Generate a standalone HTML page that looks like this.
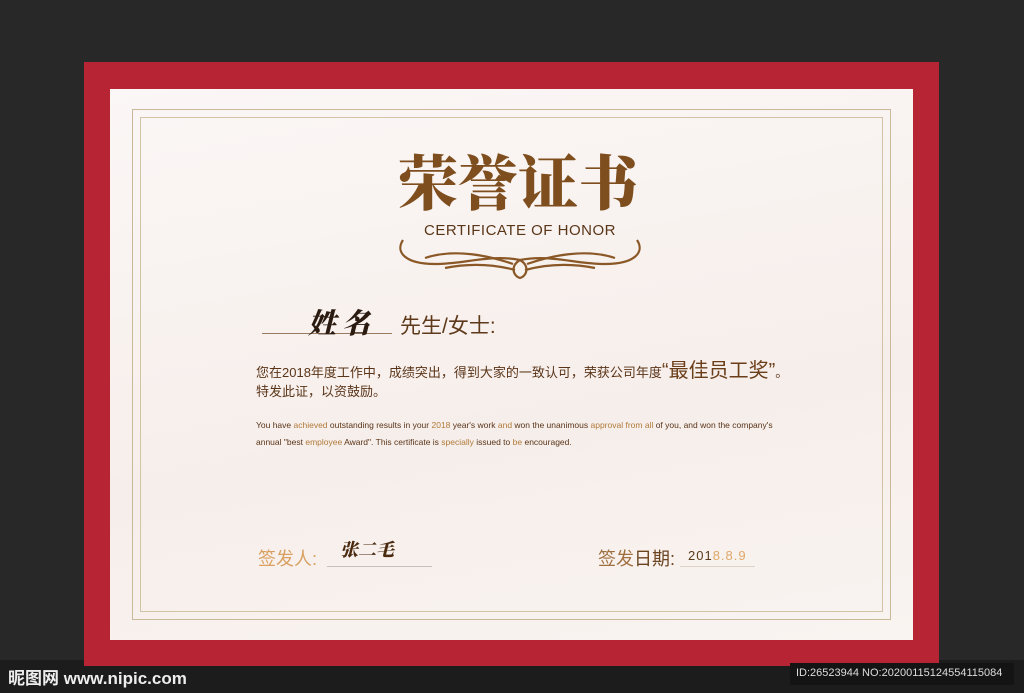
<!DOCTYPE html>
<html><head><meta charset="utf-8"><style>
*{margin:0;padding:0;box-sizing:border-box}
body{width:1024px;height:693px;background:#282828;position:relative;overflow:hidden;font-family:"Liberation Sans","Noto Sans CJK SC",sans-serif}
.abs{position:absolute}
.red{left:84px;top:62px;width:855px;height:604px;background:#b72434}
.cream{left:110px;top:89px;width:803px;height:551px;background:linear-gradient(170deg,#fbf7f6,#f6eeea 60%,#f9f4f1)}
.l1{left:132px;top:109px;width:759px;height:511px;border:1.5px solid #c9b89a}
.l2{left:140px;top:117px;width:743px;height:495px;border:1px solid #d2c2a6}
</style></head><body>
<div class="abs" style="left:0;top:660px;width:1024px;height:33px;background:#1c1c1c"></div>
<div class="abs red"></div>
<div class="abs cream"></div>
<div class="abs l1"></div>
<div class="abs l2"></div>
<div class="abs" style="left:383px;top:145px;width:270px;text-align:center;font-family:'Noto Serif CJK SC',serif;font-weight:900;font-size:60px;line-height:70px;color:#7e4e1e;letter-spacing:0px">荣誉证书</div>
<div class="abs" style="left:380px;top:222px;width:280px;text-align:center;font-size:15px;color:#5a3618;letter-spacing:0.5px">CERTIFICATE OF HONOR</div>
<svg class="abs" style="left:395px;top:236px" width="250" height="45" viewBox="0 0 250 45">
<g fill="none" stroke="#8a5826" stroke-width="2.2">
<path d="M8 4 C0 16 10 28 40 28 C70 28 95 18 125 24 C155 18 180 28 210 28 C240 28 250 16 242 4"/>
<path d="M30 22 C60 12 95 20 118 28"/><path d="M220 22 C190 12 155 20 132 28"/>
<path d="M50 32 C80 26 105 30 120 34"/><path d="M200 32 C170 26 145 30 130 34"/>
<path d="M125 24 C115 30 118 40 125 42 C132 40 135 30 125 24"/>
</g></svg>
<div class="abs" style="left:262px;top:333px;width:130px;height:1px;background:#9a7a60"></div>
<div class="abs" style="left:308px;top:302px;font-family:'Noto Serif CJK SC',serif;font-weight:900;font-style:italic;font-size:28px;color:#2a1a10;letter-spacing:6px">姓名</div>
<div class="abs" style="left:400px;top:310px;font-size:21px;color:#5e3a1a">先生/女士:</div>
<div class="abs" style="left:256px;top:360px;font-size:13px;line-height:22px;color:#5a3418">您在2018年度工作中，成绩突出，得到大家的一致认可，荣获公司年度<span style="font-size:20px;color:#6a3e18">“最佳员工奖”</span>。</div>
<div class="abs" style="left:256px;top:382px;font-size:13px;line-height:20px;color:#5a3418">特发此证，以资鼓励。</div>
<div class="abs" style="left:256px;top:417px;font-size:8.5px;line-height:17px;color:#5a3418;width:570px">You have <span style="color:#b07a3a">achieved</span> outstanding results in your <span style="color:#b07a3a">2018</span> year's work <span style="color:#b07a3a">and</span> won the unanimous <span style="color:#b07a3a">approval from all</span> of you, and won the company's<br>annual "best <span style="color:#b07a3a">employee</span> Award". This certificate is <span style="color:#b07a3a">specially</span> issued to <span style="color:#b07a3a">be</span> encouraged.</div>
<div class="abs" style="left:258px;top:545px;font-size:18px;color:#d9a060">签发人:</div>
<div class="abs" style="left:327px;top:566px;width:105px;height:1px;background:#c8c0b8"></div>
<div class="abs" style="left:340px;top:536px;font-family:'Noto Serif CJK SC',serif;font-weight:900;font-style:italic;font-size:18px;color:#4a2a10">张二毛</div>
<div class="abs" style="left:598px;top:545px;font-size:18px;color:#a07040">签发<span style="color:#6a4420">日期:</span></div>
<div class="abs" style="left:688px;top:548px;font-size:13px;color:#5a3a1a;letter-spacing:1px">201<span style="color:#e0a868">8.8.9</span></div>
<div class="abs" style="left:680px;top:566px;width:75px;height:1px;background:#ddd2c8"></div>
<div class="abs" style="left:8px;top:664px;font-size:17px;font-weight:bold;color:#eee">昵图网 www.nipic.com</div>
<div class="abs" style="left:790px;top:663px;width:224px;height:22px;background:#141414"></div>
<div class="abs" style="left:796px;top:667px;font-size:11px;color:#ddd">ID:26523944 NO:20200115124554115084</div>
</body></html>
